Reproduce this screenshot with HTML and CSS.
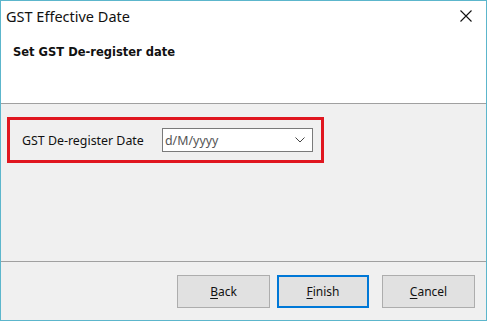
FILE: index.html
```html
<!DOCTYPE html>
<html>
<head>
<meta charset="utf-8">
<link rel="stylesheet" href="styles.css">
</head>
<body>
<div class="window">
  <div class="top">
    <div class="titlebar">
      <span class="title">GST Effective Date</span>
      <svg class="close" width="12" height="12" viewBox="0 0 12 12"><path d="M0.5 0.5L11.5 11.5M11.5 0.5L0.5 11.5" stroke="#111" stroke-width="1.1" fill="none"/></svg>
    </div>
    <div class="heading">Set GST De-register date</div>
  </div>
  <div class="body">
    <div class="field">
      <span class="label">GST De-register Date</span>
      <div class="combo">
        <span class="combo-text">d/M/yyyy</span>
        <svg class="chev" width="10" height="6" viewBox="0 0 10 6"><path d="M0.5 0.5L5 5L9.5 0.5" stroke="#444" stroke-width="1" fill="none"/></svg>
      </div>
    </div>
  </div>
  <div class="footer">
    <button class="btn"><u>B</u>ack</button>
    <button class="btn primary"><u>F</u>inish</button>
    <button class="btn"><u>C</u>ancel</button>
  </div>
</div>
</body>
</html>
```
FILE: styles.css
```css
html, body {
  margin: 0;
  padding: 0;
  background: #ffffff;
}
.window {
  width: 487px;
  height: 321px;
  box-sizing: border-box;
  border: 1px solid #5cb6cc;
  display: flex;
  flex-direction: column;
  font-family: "Noto Sans", "Open Sans", sans-serif;
  color: #000;
}
.top {
  background: #ffffff;
  height: 102px;
  border-bottom: 1px solid #a0a0a0;
  box-sizing: content-box;
}
.titlebar {
  height: 31px;
  display: flex;
  align-items: center;
  justify-content: space-between;
  padding: 0 14px 0 5px;
}
.title {
  font-size: 14.5px;
  color: #111;
  line-height: 31px;
  margin-top: -1px;
}
.close {
  display: block;
  margin-top: -1px;
}
.heading {
  font-family: "DejaVu Sans", Verdana, sans-serif;
  font-weight: bold;
  font-size: 11.5px;
  padding: 13px 0 0 12px;
  line-height: 15px;
  color: #111;
}
.body {
  flex: 1;
  background: #f0f0f0;
  border-bottom: 1px solid #a0a0a0;
  padding: 13px 0 0 6px;
}
.field {
  width: 317px;
  height: 46px;
  box-sizing: border-box;
  border: 3px solid #e0161f;
  display: flex;
  align-items: center;
  padding: 0 8px 0 12px;
  justify-content: space-between;
}
.label {
  font-size: 12.4px;
  color: #111;
}
.combo {
  width: 151px;
  height: 24px;
  box-sizing: border-box;
  background: #fff;
  border: 1px solid #7a7a7a;
  display: flex;
  align-items: center;
  justify-content: space-between;
  padding: 0 7px 0 2px;
}
.combo-text {
  font-size: 12.4px;
  color: #555;
}
.chev {
  display: block;
}
.footer {
  height: 58px;
  background: #f0f0f0;
  display: flex;
  justify-content: flex-end;
  align-items: flex-start;
  padding: 13px 11px 0 0;
  box-sizing: border-box;
  gap: 7px;
}
.btn {
  width: 93px;
  height: 33px;
  box-sizing: border-box;
  background: #e1e1e1;
  border: 1px solid #adadad;
  font-family: "Noto Sans", "Open Sans", sans-serif;
  font-size: 12px;
  color: #111;
  padding: 0;
  margin: 0;
}
.btn.primary {
  border: 2px solid #0078d7;
  width: 92px;
  margin-right: 6px;
}
.btn u {
  text-decoration-thickness: 1px;
  text-underline-offset: 2px;
}
```
